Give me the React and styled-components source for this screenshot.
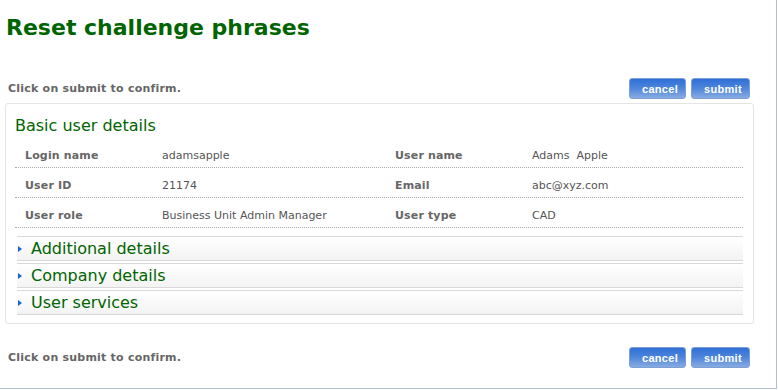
import styled, { createGlobalStyle } from 'styled-components'

const green = '#006400'

const GlobalStyle = createGlobalStyle`
  html, body {
    margin: 0;
    padding: 0;
    background: #fff;
  }
  body {
    font-family: "DejaVu Sans", Verdana, sans-serif;
  }
`

const Page = styled.div`
  box-sizing: border-box;
  width: 777px;
  height: 389px;
  border-right: 1px solid #b4c2cc;
  border-bottom: 1px solid #b4c2cc;
`

const Title = styled.h1`
  margin: 0;
  padding: 14px 0 0 6px;
  height: 67px;
  box-sizing: border-box;
  font-size: 22px;
  line-height: 28px;
  font-weight: bold;
  color: ${green};
`

const Toolbar = styled.div`
  display: flex;
  align-items: center;
  justify-content: space-between;
  height: 21px;
  padding: 0 26px 0 8px;
  margin: ${p => p.$top || 0}px 0 0 0;
`

const Hint = styled.span`
  font-size: 11px;
  font-weight: bold;
  letter-spacing: 0.22px;
  color: #666;
`

const Buttons = styled.div`
  display: flex;
  gap: 5px;
`

const Button = styled.button`
  box-sizing: border-box;
  width: ${p => p.$w}px;
  height: 21px;
  padding: 0 0 0 5px;
  border: 1px solid #7d9fd6;
  border-radius: 3px;
  background: linear-gradient(#2f6fd6, #4f86dc 50%, #88abe2);
  color: #fff;
  font-family: "Liberation Sans", Arial, sans-serif;
  font-size: 11px;
  font-weight: bold;
  letter-spacing: 0.3px;
  cursor: pointer;
`

const Panel = styled.div`
  box-sizing: border-box;
  width: 749px;
  margin: 4px 0 0 5px;
  padding: 12px 9px 8px 9px;
  border: 1px solid #e4e4e4;
  border-radius: 3px;
`

const Heading = styled.h2`
  margin: 0 0 2px 0;
  font-size: 16px;
  line-height: 20px;
  font-weight: normal;
  color: ${green};
`

const Row = styled.div`
  display: grid;
  grid-template-columns: 147px 233px 137px 1fr;
  height: 30px;
  box-sizing: border-box;
  padding-top: 5px;
  align-items: center;
  border-bottom: 1px dotted #a8a8a8;
  margin-right: 1px;
`

const Label = styled.span`
  padding-left: ${p => (p.$first ? 10 : 0)}px;
  font-size: 11px;
  font-weight: bold;
  letter-spacing: 0.15px;
  color: #666;
`

const Value = styled.span`
  font-size: 11px;
  color: #555;
  white-space: pre;
`

const Sections = styled.div`
  display: flex;
  flex-direction: column;
  gap: 2px;
  margin: 8px 1px 0 2px;
`

const SectionHeader = styled.div`
  display: flex;
  align-items: center;
  gap: 9px;
  height: 25px;
  box-sizing: border-box;
  padding-left: 1px;
  border-top: 1px solid #d8d8d8;
  border-bottom: 1px solid #d8d8d8;
  background: linear-gradient(#ffffff, #f3f3f3);
  font-size: 16px;
  color: ${green};
  cursor: pointer;
`

const Arrow = styled.span`
  width: 0;
  height: 0;
  border-top: 3.5px solid transparent;
  border-bottom: 3.5px solid transparent;
  border-left: 4px solid #1a66d0;
`

const details = [
  ['Login name', 'adamsapple', 'User name', 'Adams  Apple'],
  ['User ID', '21174', 'Email', 'abc@xyz.com'],
  ['User role', 'Business Unit Admin Manager', 'User type', 'CAD'],
]

const sections = ['Additional details', 'Company details', 'User services']

function ActionBar({ top }) {
  return (
    <Toolbar $top={top}>
      <Hint>Click on submit to confirm.</Hint>
      <Buttons>
        <Button $w={57}>cancel</Button>
        <Button $w={59}>submit</Button>
      </Buttons>
    </Toolbar>
  )
}

export default function App() {
  return (
    <Page>
      <GlobalStyle />
      <Title>Reset challenge phrases</Title>
      <ActionBar top={11} />
      <Panel>
        <Heading>Basic user details</Heading>
        {details.map(r => (
          <Row key={r[0]}>
            <Label $first>{r[0]}</Label>
            <Value>{r[1]}</Value>
            <Label>{r[2]}</Label>
            <Value>{r[3]}</Value>
          </Row>
        ))}
        <Sections>
          {sections.map(s => (
            <SectionHeader key={s}>
              <Arrow />
              {s}
            </SectionHeader>
          ))}
        </Sections>
      </Panel>
      <ActionBar top={23} />
    </Page>
  )
}
